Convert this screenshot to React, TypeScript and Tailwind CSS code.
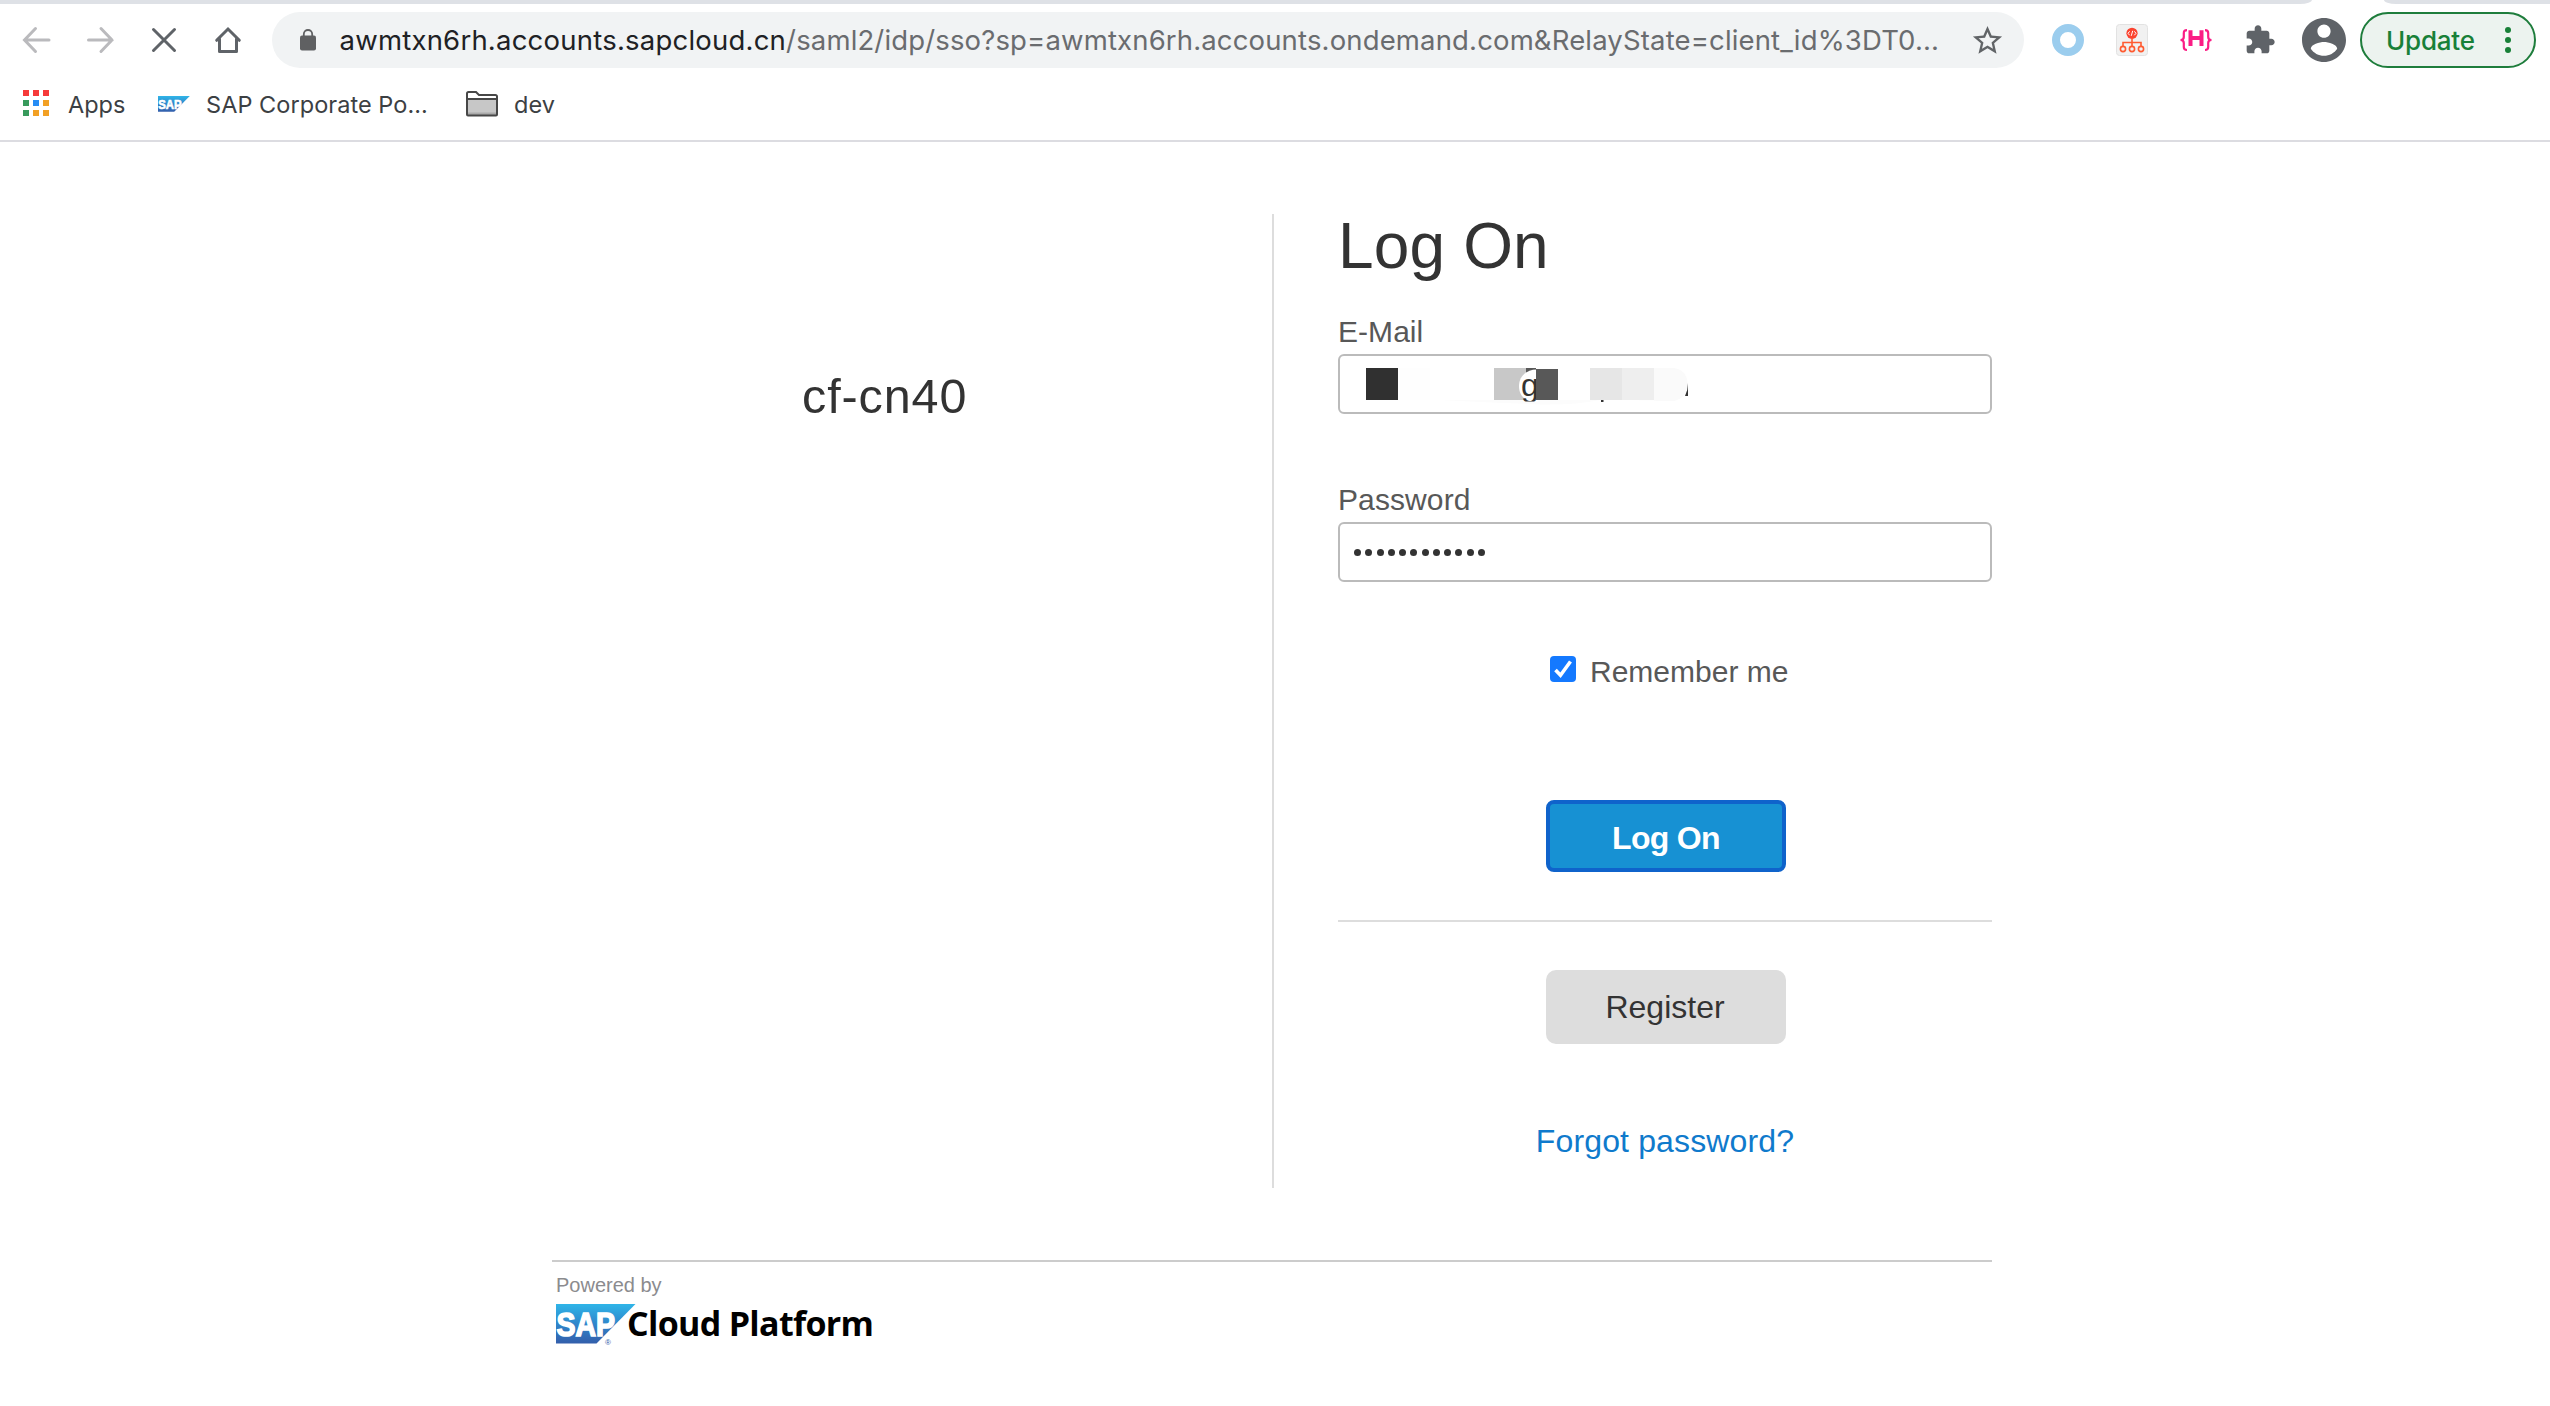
import type { ReactNode } from 'react';

function NavIcon({ children, color }: { children: ReactNode; color: string }) {
  return (
    <svg viewBox="0 0 32 32" className={`size-8 shrink-0 ${color}`} fill="none" stroke="currentColor" strokeWidth="3" strokeLinecap="round">
      {children}
    </svg>
  );
}

function SapLogo({ id, className }: { id: string; className: string }) {
  return (
    <svg viewBox="0 0 80 40" className={className} overflow="visible">
      <defs>
        <linearGradient id={id} x1="0" y1="0" x2="0" y2="1">
          <stop offset="0" stopColor="#2fb5e8" />
          <stop offset="0.5" stopColor="#2f86cb" />
          <stop offset="1" stopColor="#335eab" />
        </linearGradient>
      </defs>
      <path d="M0 0H79.500L40.500 39.500H0Z" fill={`url(#${id})`} />
      <text x="0.500" y="32" textLength="58.500" lengthAdjust="spacingAndGlyphs" fill="#fff" stroke="#fff" strokeWidth="1.600" fontFamily="Liberation Sans, sans-serif" fontWeight="700" fontSize="33.500">
        SAP
      </text>
    </svg>
  );
}

const appDots = [
  'bg-[#f63a3a]', 'bg-[#f63a3a]', 'bg-[#f63a3a]',
  'bg-[#389a5c]', 'bg-[#268cf5]', 'bg-[#f2a024]',
  'bg-[#389a5c]', 'bg-[#f2a024]', 'bg-[#f2a024]',
];

function TabStrip() {
  return (
    <div className="flex h-1 justify-between">
      <div className="w-[2312px] rounded-br-[12px_4px] bg-[#dee1e6]" />
      <div className="w-[166px] rounded-bl-[12px_4px] bg-[#dee1e6]" />
    </div>
  );
}

function Toolbar() {
  return (
    <div className="flex h-[72px] items-center pl-5">
      <div className="flex gap-8">
        <NavIcon color="text-[#bababd]">
          <path d="M29 16H5M15.500 4.500 4.500 16 15.500 27.500" />
        </NavIcon>
        <NavIcon color="text-[#bababd]">
          <path d="M4.500 16H28M17 4.500 28 16 17 27.500" />
        </NavIcon>
        <NavIcon color="text-[#5f6368]">
          <path d="M5.500 5.500 26.500 26.500M26.500 5.500 5.500 26.500" />
        </NavIcon>
        <NavIcon color="text-[#5f6368]">
          <path d="M4.700 16.300 16 5 27.300 16.300" />
          <path d="M7.500 15V27.500H24.500V15" strokeLinejoin="round" />
        </NavIcon>
      </div>

      <div className="ml-7 flex h-14 w-[1752px] shrink-0 items-center rounded-full bg-[#f1f3f4] pl-7">
        <svg viewBox="0 0 16 22" className="h-[22px] w-4">
          <rect y="6.500" width="16" height="15" rx="2" fill="#5f6062" />
          <path d="M3.800 8V5.200a4.200 4.200 0 0 1 8.400 0V8" fill="none" stroke="#5f6062" strokeWidth="1.800" />
        </svg>
        <div className="ml-[23.5px] w-[1609.5px] whitespace-nowrap font-['Inter',sans-serif] text-[27.5px] leading-[56px]">
          <span className="tracking-[0.22px] text-[#202124]">awmtxn6rh.accounts.sapcloud.cn</span>
          <span className="tracking-[0.15px] text-[#6a6c6f]">/saml2/idp/sso?sp=awmtxn6rh.accounts.ondemand.com&amp;RelayState=client_id%3DT0...</span>
        </div>
        <svg viewBox="0 0 24 24" className="ml-[21px] size-[35px]" fill="#616467">
          <path d="M22 9.240l-7.190-.62L12 2 9.190 8.630 2 9.240l5.460 4.730L5.820 21 12 17.270 18.180 21l-1.630-7.030L22 9.240zM12 15.400l-3.760 2.270 1-4.280-3.320-2.880 4.380-.38L12 6.100l1.710 4.040 4.380.38-3.320 2.880 1 4.280L12 15.400z" />
        </svg>
      </div>

      <div className="ml-7 flex items-center gap-8">
        <div className="size-8 rounded-full border-8 border-[#9bcdee]" />
        <svg viewBox="0 0 32 32" className="size-8" fill="none" stroke="#ff5a30" strokeWidth="1.600">
          <rect x="0.500" y="0.500" width="31" height="31" rx="3" fill="#f1f1f1" stroke="#e2e2e2" strokeWidth="1" />
          <circle cx="16" cy="9.300" r="5.600" fill="#fb432f" stroke="none" />
          <path d="M13.700 7.300 12 9.300l1.700 2M18.300 7.300 20 9.300l-1.700 2M16.700 6.800 15.300 11.800" stroke="#fff" strokeWidth="1" />
          <path d="M16 14.500V22.500M7 22.500V18.500H25V22.500" />
          <circle cx="7" cy="25" r="2.600" />
          <circle cx="16" cy="25" r="2.600" />
          <circle cx="25" cy="25" r="2.600" />
        </svg>
        <svg viewBox="0 0 32 32" className="size-8" fill="none" stroke="#fb1d85">
          <path d="M7 6.200C4.500 6.200 3.800 7 3.800 9V13C3.800 15 2.500 16 .5 16 2.500 16 3.800 17 3.800 19V23C3.800 25 4.500 26 7 26M25 6.200C27.500 6.200 28.200 7 28.200 9V13C28.200 15 29.500 16 31.500 16 29.500 16 28.200 17 28.200 19V23C28.200 25 27.500 26 25 26" strokeWidth="2.200" />
          <path d="M10.500 6.300V22M21.500 6.300V22M10.500 14H21.500" strokeWidth="4" />
        </svg>
        <svg viewBox="0 0 24 24" className="size-8" fill="#5f6368">
          <path d="M20.500 11H19V7c0-1.100-.9-2-2-2h-4V3.500C13 2.120 11.880 1 10.500 1S8 2.120 8 3.500V5H4c-1.100 0-1.990.9-1.990 2v3.800H3.500c1.490 0 2.700 1.210 2.700 2.700s-1.210 2.700-2.700 2.700H2V20c0 1.100.9 2 2 2h3.800v-1.500c0-1.490 1.210-2.700 2.700-2.700 1.490 0 2.700 1.210 2.700 2.700V22H17c1.100 0 2-.9 2-2v-4h1.500c1.380 0 2.500-1.120 2.500-2.500S21.880 11 20.500 11z" />
        </svg>
      </div>

      <svg viewBox="2 2 20 20" className="ml-[26px] size-11 shrink-0" fill="#5f6368">
        <path d="M12 2C6.480 2 2 6.480 2 12s4.480 10 10 10 10-4.480 10-10S17.520 2 12 2zm0 3c1.660 0 3 1.340 3 3s-1.340 3-3 3-3-1.340-3-3 1.340-3 3-3zm0 14.200c-2.500 0-4.710-1.280-6-3.220.03-1.990 4-3.080 6-3.080 1.990 0 5.970 1.090 6 3.080-1.290 1.940-3.500 3.220-6 3.220z" />
      </svg>

      <div className="ml-3.5 flex h-14 w-44 shrink-0 items-center rounded-full border-2 border-[#1e7d3c] bg-[#ecf3ef] pl-6">
        <span className="w-[91px] pt-px font-['Inter',sans-serif] text-[26px] font-medium leading-[51px] tracking-[-0.2px] text-[#188038]">Update</span>
        <div className="ml-[28px] flex flex-col gap-1">
          <i className="size-1.5 rounded-full bg-[#188038]" />
          <i className="size-1.5 rounded-full bg-[#188038]" />
          <i className="size-1.5 rounded-full bg-[#188038]" />
        </div>
      </div>
    </div>
  );
}

function BookmarksBar() {
  return (
    <div className="border-b-2 border-[#dcdce1] pb-2.5">
      <div className="flex h-[54px] items-center whitespace-nowrap pl-[23px] font-['Inter',sans-serif] text-[23.5px] leading-[53px] text-[#3c4043]">
        <div className="grid grid-cols-3 gap-1">
          {appDots.map((c, i) => (
            <i key={i} className={`size-1.5 ${c}`} />
          ))}
        </div>
        <span className="ml-[19px] w-[90px] pt-0.5">Apps</span>
        <SapLogo id="sapBookmark" className="mt-0.5 h-4 w-8" />
        <span className="ml-4 w-[260px] pt-0.5 tracking-[0.05px]">SAP Corporate Po...</span>
        <svg viewBox="0 0 32 26" className="mt-px h-[26px] w-8">
          <path d="M1 22.500V2.500a1.500 1.500 0 0 1 1.500-1.500H10l3 3H29.500A1.500 1.500 0 0 1 31 5.500V8H1Z" fill="#fff" />
          <path d="M1 8H31V24H1Z" fill="#c7c7c7" />
          <path d="M1 21.500H31V24H1Z" fill="#aaa" />
          <path d="M1 8H31M1 23.500V2.500a1.500 1.500 0 0 1 1.500-1.500H10l3 3H29.500A1.500 1.500 0 0 1 31 5.500V23.500A1 1 0 0 1 30 24.500H2A1 1 0 0 1 1 23.500Z" fill="none" stroke="#474747" strokeWidth="2" />
        </svg>
        <span className="ml-4 pt-0.5">dev</span>
      </div>
    </div>
  );
}

/* Redacted e-mail value: mosaic blocks with fragments of text left visible. */
function RedactedValue() {
  return (
    <svg viewBox="0 0 350 56" className="h-14 w-[350px]">
      <defs>
        <clipPath id="gClip">
          <rect x="178" y="10" width="18" height="35.500" />
        </clipPath>
      </defs>
      <path d="M100 44H260Q230 50 190 48Q140 46 100 44Z" fill="#fcfcfc" />
      <rect x="26" y="12" width="32" height="32" fill="#303030" />
      <rect x="58" y="12" width="32" height="32" fill="#fefefe" />
      <rect x="154" y="12" width="32" height="32" fill="#c8c8c8" />
      <rect x="186" y="12" width="10" height="5" fill="#585858" />
      <path d="M198 13.500C186 13 179 21 179 30C179 38 183 46 198 46Z" fill="#fff" />
      <text x="181" y="40" clipPath="url(#gClip)" fontFamily="Liberation Sans, sans-serif" fontSize="32" fill="#333">g</text>
      <rect x="196" y="13" width="22" height="31" fill="#585858" />
      <rect x="250" y="12" width="32" height="32" fill="#e6e6e6" />
      <rect x="282" y="12" width="32" height="32" fill="#eee" />
      <path d="M314 12H334Q347 14 347.500 28Q347 42 334 45L282 44.500H314Z" fill="#fafafa" />
      <rect x="261" y="44" width="2.500" height="2" fill="#333" />
      <path d="M348 27V40H345Q348 34 348 27Z" fill="#333" />
    </svg>
  );
}

function LogOnForm() {
  return (
    <div className="flex w-[718px] flex-col pl-16 font-['Liberation_Sans',Arial,sans-serif]">
      <h1 className="text-[64px] leading-[64px] tracking-[0.15px] text-[#333]">Log On</h1>

      <label className="mt-[39px] text-[30px] leading-[30px] tracking-[0.05px] text-[#585858]">E-Mail</label>
      <div className="mt-[7px] flex h-[60px] items-center rounded-md border-2 border-[#bbb]">
        <RedactedValue />
      </div>

      <label className="mt-[71px] text-[30px] leading-[30px] tracking-[0.1px] text-[#585858]">Password</label>
      <div className="mt-[7px] flex h-[60px] items-center gap-[4.25px] rounded-md border-2 border-[#bbb] pl-3.5">
        {Array.from({ length: 12 }, (_, i) => (
          <i key={i} className="size-[7px] rounded-full bg-[#333]" />
        ))}
      </div>

      <div className="mt-[74px] flex h-[31px] items-start pl-[212px]">
        <svg viewBox="0 0 26 26" className="size-[26px]">
          <rect width="26" height="26" rx="4" fill="#1479ff" />
          <path d="M5.500 14 10.500 19.300 20.500 5.500" fill="none" stroke="#fff" strokeWidth="3.600" />
        </svg>
        <span className="ml-3.5 mt-px text-[30px] leading-[30px] text-[#585858]">Remember me</span>
      </div>

      <button className="ml-[208px] mt-[113px] h-[72px] w-60 rounded-lg border-4 border-[#0f63cb] bg-[#1791d3] pt-1 text-center text-[32px] font-bold leading-[60px] tracking-[-0.7px] text-white">
        Log On
      </button>

      <div className="mt-12 h-0.5 bg-[#ddd]" />

      <button className="ml-[208px] mt-12 h-[74px] w-60 rounded-[10px] bg-[#ddd] pr-0.5 text-center text-[32px] leading-[74px] text-[#333]">
        Register
      </button>

      <a className="mt-[81px] self-center text-[32px] leading-8 tracking-[0.15px] text-[#0f7acc]">Forgot password?</a>
    </div>
  );
}

function Footer() {
  return (
    <footer className="mt-[72px] border-t-2 border-[#ccc] pl-[5px]">
      <p className="-ml-px mt-[13px] font-['Liberation_Sans',Arial,sans-serif] text-[20px] leading-5 text-[#8b8b8e]">Powered by</p>
      <div className="mt-[9px] flex h-10">
        <SapLogo id="sapFooter" className="-ml-px h-10 w-20" />
        <span className="-ml-[31px] mt-[35px] h-2 w-[10px] font-['Liberation_Sans',Arial,sans-serif] text-[8px] leading-[8px] text-[#335eab]">®</span>
        <span className="ml-[12px] whitespace-nowrap font-['Open_Sans',sans-serif] text-[34px] font-bold leading-[38px] tracking-[-0.68px] text-black">Cloud Platform</span>
      </div>
    </footer>
  );
}

export default function App() {
  return (
    <div className="h-[1406px] w-[2550px] overflow-hidden bg-white">
      <TabStrip />
      <Toolbar />
      <BookmarksBar />
      <main className="ml-[552px] mt-[72px] w-[1440px]">
        <div className="flex h-[974px]">
          <div className="w-[722px] border-r-2 border-[#ddd] pl-[250px] pt-[158px]">
            <p className="font-['Liberation_Sans',Arial,sans-serif] text-[48.5px] leading-[48px] tracking-[0.9px] text-[#333]">cf-cn40</p>
          </div>
          <LogOnForm />
        </div>
        <Footer />
      </main>
    </div>
  );
}
